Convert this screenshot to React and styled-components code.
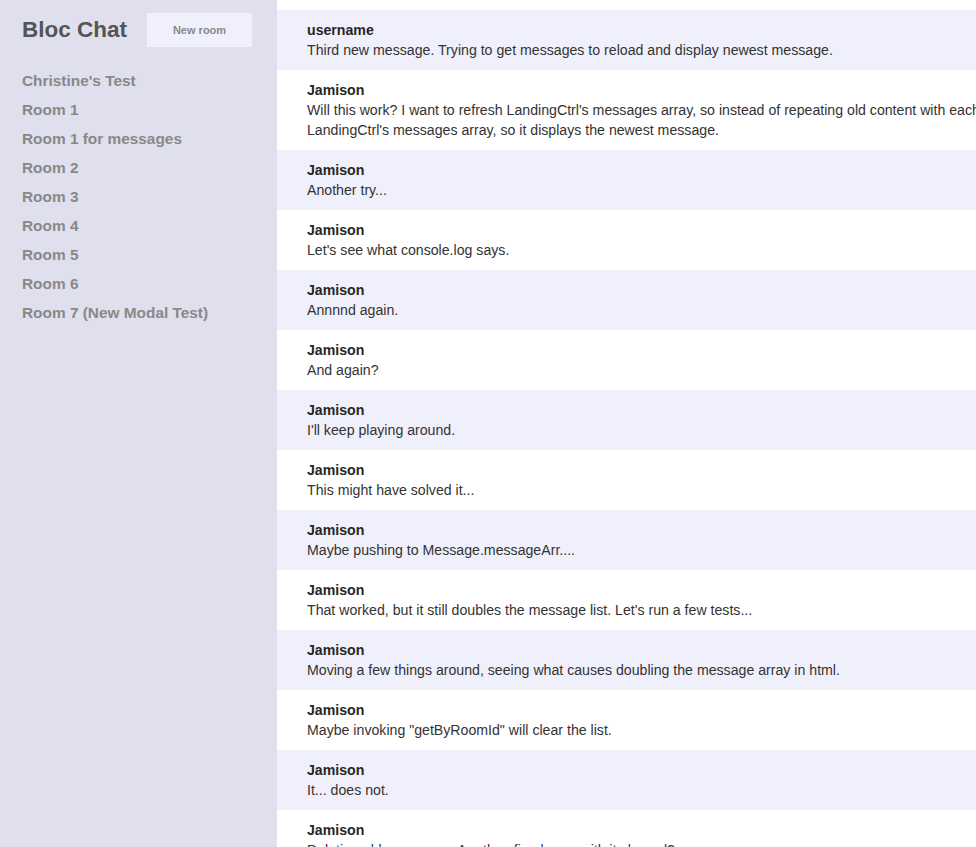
import React from 'react';
import styled, { createGlobalStyle } from 'styled-components';

const GlobalStyle = createGlobalStyle`
  html, body {
    margin: 0;
    padding: 0;
    background: #fff;
    font-family: "Liberation Sans", Arial, sans-serif;
  }
`;

const Page = styled.div`
  display: flex;
  width: 100vw;
  height: 100vh;
  overflow: hidden;
`;

const Sidebar = styled.aside`
  flex: 0 0 277px;
  background: #e0dfee;
  padding: 13px 0 0 22px;
  box-sizing: border-box;
`;

const SidebarHeader = styled.div`
  display: flex;
  align-items: center;
  gap: 20px;
  height: 34px;
`;

const Title = styled.h1`
  margin: 0;
  font-size: 22.5px;
  font-weight: bold;
  color: #555;
`;

const NewRoomButton = styled.button`
  width: 105px;
  height: 34px;
  border: none;
  background: #f0f0fc;
  color: #888;
  font-family: "Liberation Sans", Arial, sans-serif;
  font-size: 11px;
  font-weight: bold;
  cursor: pointer;
`;

const RoomList = styled.ul`
  list-style: none;
  margin: 0;
  padding: 19px 0 0 0;
`;

const Room = styled.li`
  font-size: 15.4px;
  font-weight: bold;
  line-height: 29px;
  color: #888;
`;

const Main = styled.main`
  flex: 0 0 915px;
  padding-top: 10px;
`;

const MessageRow = styled.div`
  padding: 10px 30px;
  background: ${(p) => (p.shaded ? '#f0f0fc' : '#fff')};
  font-size: 14.15px;
  line-height: 20px;
  color: #333;
`;

const Username = styled.div`
  font-weight: bold;
  color: #262626;
`;

const Content = styled.div``;

const rooms = [
  "Christine's Test",
  'Room 1',
  'Room 1 for messages',
  'Room 2',
  'Room 3',
  'Room 4',
  'Room 5',
  'Room 6',
  'Room 7 (New Modal Test)',
];

const messages = [
  { user: 'username', text: 'Third new message. Trying to get messages to reload and display newest message.' },
  {
    user: 'Jamison',
    text: "Will this work? I want to refresh LandingCtrl's messages array, so instead of repeating old content with each new message, it replaces LandingCtrl's messages array, so it displays the newest message.",
  },
  { user: 'Jamison', text: 'Another try...' },
  { user: 'Jamison', text: "Let's see what console.log says." },
  { user: 'Jamison', text: 'Annnnd again.' },
  { user: 'Jamison', text: 'And again?' },
  { user: 'Jamison', text: "I'll keep playing around." },
  { user: 'Jamison', text: 'This might have solved it...' },
  { user: 'Jamison', text: 'Maybe pushing to Message.messageArr....' },
  { user: 'Jamison', text: "That worked, but it still doubles the message list. Let's run a few tests..." },
  { user: 'Jamison', text: 'Moving a few things around, seeing what causes doubling the message array in html.' },
  { user: 'Jamison', text: 'Maybe invoking "getByRoomId" will clear the list.' },
  { user: 'Jamison', text: 'It... does not.' },
  { user: 'Jamison', text: 'Deleting old messages. Are they fixed now, with it cleared?' },
];

export default function App() {
  return (
    <>
      <GlobalStyle />
      <Page>
        <Sidebar>
          <SidebarHeader>
            <Title>Bloc Chat</Title>
            <NewRoomButton>New room</NewRoomButton>
          </SidebarHeader>
          <RoomList>
            {rooms.map((r) => (
              <Room key={r}>{r}</Room>
            ))}
          </RoomList>
        </Sidebar>
        <Main>
          {messages.map((m, i) => (
            <MessageRow key={i} shaded={i % 2 === 0}>
              <Username>{m.user}</Username>
              <Content>{m.text}</Content>
            </MessageRow>
          ))}
        </Main>
      </Page>
    </>
  );
}
